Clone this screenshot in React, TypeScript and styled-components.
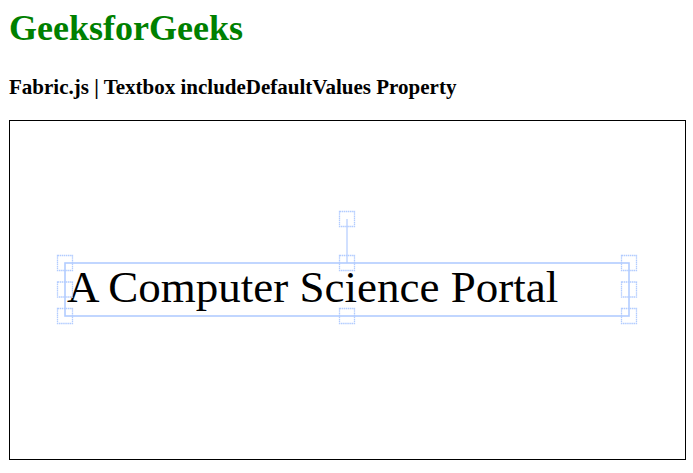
import React from 'react';
import styled, { createGlobalStyle } from 'styled-components';

const GlobalStyle = createGlobalStyle`
  html, body {
    margin: 0;
    padding: 0;
    background: #ffffff;
  }
  body {
    font-family: "Liberation Serif", "Times New Roman", serif;
    color: #000000;
  }
`;

const SEL = 'rgb(178, 204, 255)';

// selection box in canvas coordinates
const box = { left: 55, top: 142, right: 619, bottom: 195 };
const CORNER = 15;

const App = () => {
  const midX = (box.left + box.right) / 2;
  const midY = (box.top + box.bottom) / 2;
  const handles = [
    [box.left, box.top], [midX, box.top], [box.right, box.top],
    [box.left, midY], [box.right, midY],
    [box.left, box.bottom], [midX, box.bottom], [box.right, box.bottom],
  ];
  const rotY = 98;

  return (
    <Page>
      <GlobalStyle />
      <Title>GeeksforGeeks</Title>
      <Subtitle>Fabric.js | Textbox includeDefaultValues Property</Subtitle>

      <Canvas>
        <CanvasText>A Computer Science Portal</CanvasText>
        <Controls width="675" height="338" viewBox="0 0 675 338">
          <line x1={midX} y1={rotY} x2={midX} y2={box.top} stroke={SEL} strokeWidth="1.2" />
          <rect
            x={box.left}
            y={box.top}
            width={box.right - box.left}
            height={box.bottom - box.top}
            fill="none"
            stroke={SEL}
            strokeWidth="1.6"
          />
          {handles.map(([x, y], i) => (
            <rect
              key={i}
              x={x - CORNER / 2}
              y={y - CORNER / 2}
              width={CORNER}
              height={CORNER}
              fill="none"
              stroke={SEL}
              strokeWidth="1.3"
              strokeDasharray="1.5 0.6"
            />
          ))}
          <rect
            x={midX - CORNER / 2}
            y={rotY - CORNER / 2}
            width={CORNER}
            height={CORNER}
            fill="none"
            stroke={SEL}
            strokeWidth="1.3"
            strokeDasharray="1.5 0.6"
          />
        </Controls>
      </Canvas>
    </Page>
  );
};

export default App;

const Page = styled.div`
  display: flex;
  flex-flow: column;
  align-items: flex-start;
  padding: 8px 9px;
`;

const Title = styled.h1`
  margin: 0;
  font-size: 36px;
  line-height: 40px;
  font-weight: 700;
  color: #008000;
`;

const Subtitle = styled.h3`
  margin: 27px 0 0;
  font-size: 21px;
  line-height: 24px;
  font-weight: 700;
`;

const Canvas = styled.div`
  position: relative;
  margin-top: 21px;
  width: 675px;
  height: 338px;
  border: 1px solid #000000;
  overflow: hidden;
`;

const CanvasText = styled.div`
  position: absolute;
  left: 57px;
  top: 144px;
  font-family: "Liberation Serif", "Times New Roman", serif;
  font-size: 45px;
  line-height: 45px;
  white-space: nowrap;
  color: #000000;
`;

const Controls = styled.svg`
  position: absolute;
  inset: 0;
  pointer-events: none;
`;
